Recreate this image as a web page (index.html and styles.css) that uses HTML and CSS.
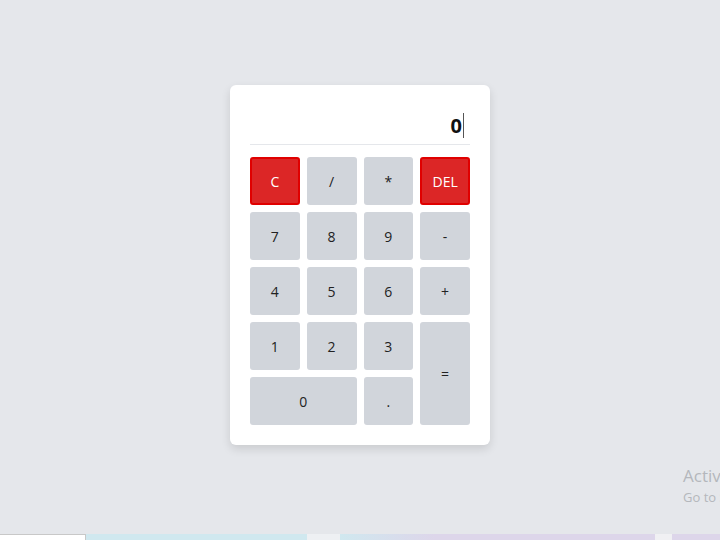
FILE: index.html
```html
<!DOCTYPE html>
<html lang="en">
<head>
  <meta charset="UTF-8">
  <meta name="viewport" content="width=device-width, initial-scale=1.0">
  <title>Calculator</title>
  <link rel="stylesheet" href="styles.css">
</head>
<body>
  <main class="stage">
    <div class="calculator">
      <div class="display"><span class="value">0</span><span class="caret"></span></div>
      <div class="keys">
        <button class="key danger">C</button>
        <button class="key">/</button>
        <button class="key">*</button>
        <button class="key danger">DEL</button>
        <button class="key">7</button>
        <button class="key">8</button>
        <button class="key">9</button>
        <button class="key">-</button>
        <button class="key">4</button>
        <button class="key">5</button>
        <button class="key">6</button>
        <button class="key">+</button>
        <button class="key">1</button>
        <button class="key">2</button>
        <button class="key">3</button>
        <button class="key equals">=</button>
        <button class="key zero">0</button>
        <button class="key">.</button>
      </div>
    </div>
    <div class="watermark">
      <p class="wm-title">Activ</p>
      <p class="wm-sub">Go to S</p>
    </div>
  </main>
  <footer class="strip">
    <span class="seg s1"></span>
    <span class="seg s2"></span>
    <span class="seg s3"></span>
    <span class="seg s4"></span>
    <span class="seg s5"></span>
    <span class="seg s6"></span>
  </footer>
</body>
</html>
```

FILE: styles.css
```css
* {
  margin: 0;
  padding: 0;
  box-sizing: border-box;
  font-family: 'Open Sans', 'Noto Sans', sans-serif;
}
body {
  height: 100vh;
  display: flex;
  flex-direction: column;
  background: #e5e7eb;
  overflow: hidden;
}
.stage {
  flex: 1;
  display: flex;
  justify-content: center;
  align-items: center;
  position: relative;
}
.calculator {
  width: 260px;
  background: #fff;
  padding: 20px;
  border-radius: 6px;
  box-shadow: 0 4px 10px rgba(0, 0, 0, 0.12);
  margin-bottom: 4px;
}
.display {
  height: 40px;
  display: flex;
  justify-content: flex-end;
  align-items: center;
  border-bottom: 1px solid #e5e7eb;
  padding: 2px 6px 0 0;
  margin-bottom: 12px;
}
.value {
  font-size: 20px;
  font-weight: 700;
  color: #111;
  line-height: 1;
}
.caret {
  width: 1px;
  height: 25px;
  background: #555;
  margin-left: 1px;
}
.keys {
  display: grid;
  grid-template-columns: repeat(4, 1fr);
  grid-auto-rows: 48px;
  column-gap: 7px;
  row-gap: 7px;
}
.key {
  background: #d1d5db;
  border: none;
  border-radius: 3px;
  font-size: 14px;
  color: #222;
  cursor: pointer;
}
.key.danger {
  background: #dc2626;
  border: 2px solid #e00000;
  color: #fff;
}
.key.equals {
  grid-row: span 2;
}
.key.zero {
  grid-column: span 2;
}
.watermark {
  position: absolute;
  left: 683px;
  top: 465px;
  white-space: nowrap;
  color: #b4b7bc;
}
.wm-title {
  font-size: 17px;
  line-height: 22px;
}
.wm-sub {
  font-size: 13px;
  line-height: 20px;
}
.strip {
  height: 6px;
  display: flex;
}
.seg { height: 100%; }
.s1 { width: 86px; background: #fff; border-top: 1px solid #c8c8c8; border-right: 1px solid #c8c8c8; }
.s2 { width: 221px; background: #d0e8ef; }
.s3 { width: 33px; background: #eef0f3; }
.s4 { width: 315px; background: linear-gradient(to right, #d0e8ef, #ddd6ea 30%); }
.s5 { width: 17px; background: #f0f0f3; }
.s6 { flex: 1; background: #ddd6ea; }
```
